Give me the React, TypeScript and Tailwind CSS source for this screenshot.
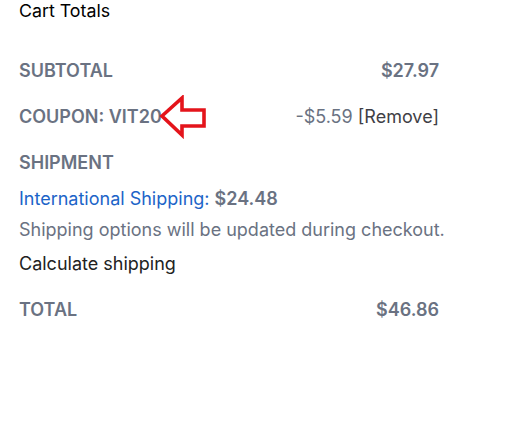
import React from 'react';

const Arrow: React.FC = () => (
  <svg width="48" height="44" viewBox="0 0 48 44">
    <path
      d="M3 21 L23 3 L23 15 L45 15 L45 31 L23 31 L23 40 Z"
      fill="none"
      stroke="#e4141b"
      strokeWidth="3.6"
      strokeLinejoin="miter"
    />
  </svg>
);

const App: React.FC = () => {
  return (
    <div className="w-[520px] h-[436px] bg-white font-['Inter',sans-serif] text-[18px]">
      <div className="w-[439px] pl-[19px]">
        <h2 className="text-[17.8px] leading-[22px] text-black">Cart Totals</h2>

        {/* Subtotal */}
        <div className="flex justify-between items-center mt-[36px] h-[24px]">
          <span className="font-semibold text-gray-500">SUBTOTAL</span>
          <span className="font-semibold text-gray-500">$27.97</span>
        </div>

        {/* Coupon */}
        <div className="flex justify-between items-center mt-[22px] h-[24px]">
          <div className="flex items-center">
            <span className="font-semibold text-gray-500">COUPON: VIT20</span>
            <div className="relative w-0 h-[24px]">
              <div className="absolute left-[-3px] top-[-9px]">
                <Arrow />
              </div>
            </div>
          </div>
          <span className="text-gray-500">
            -$5.59 <span className="text-[#3f3f46]">[Remove]</span>
          </span>
        </div>

        {/* Shipment */}
        <div className="mt-[22px] h-[24px] flex items-center font-semibold text-gray-500">SHIPMENT</div>
        <div className="mt-[12px] h-[24px] flex items-center">
          <span className="text-[#1c64c8]">International Shipping:</span>
          <span className="ml-[5px] font-semibold text-gray-500">$24.48</span>
        </div>
        <p className="mt-[7px] h-[24px] flex items-center text-gray-500 whitespace-nowrap">
          Shipping options will be updated during checkout.
        </p>
        <p className="mt-[10px] h-[24px] flex items-center text-[#222]">Calculate shipping</p>

        {/* Total */}
        <div className="flex justify-between items-center mt-[22px] h-[24px]">
          <span className="font-semibold text-gray-500">TOTAL</span>
          <span className="font-semibold text-gray-500">$46.86</span>
        </div>
      </div>
    </div>
  );
};

export default App;
